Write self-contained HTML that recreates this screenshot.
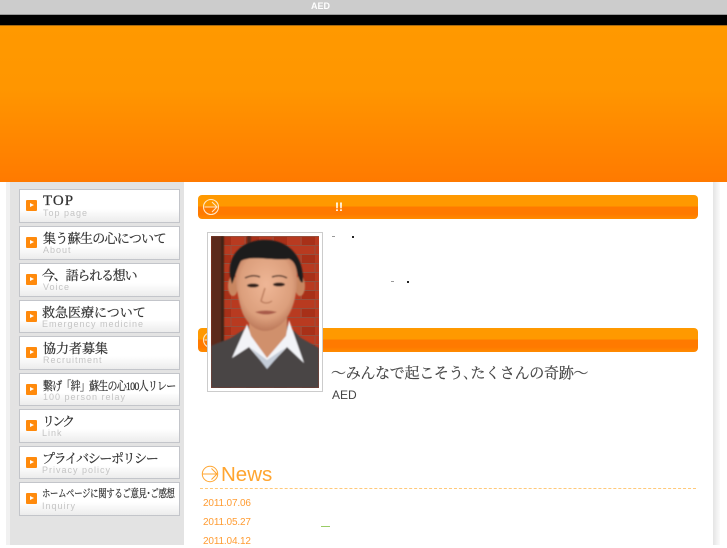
<!DOCTYPE html>
<html lang="ja">
<head>
<meta charset="utf-8">
<title>AED</title>
<style>
html,body{margin:0;padding:0;background:#fff}
body{position:relative;width:727px;height:545px;overflow:hidden;font-family:"Liberation Sans","Noto Sans CJK JP",sans-serif}
.a{position:absolute}
#top{left:0;top:0;width:727px;height:14px;background:#ccc;border-bottom:1px solid #999}
#top span{position:absolute;left:311px;top:0;font-size:9px;line-height:12px;font-weight:bold;color:#fff}
#blk{left:0;top:15px;width:727px;height:10px;background:#000}
#hdr{left:0;top:25px;width:727px;height:157px;background:linear-gradient(#ff9900,#ff9600 40%,#ff7a00);border-top:1px solid #a86a10;box-sizing:border-box}
#sh1{left:6px;top:182px;width:4px;height:363px;background:#f1f1f1}
#side{left:10px;top:182px;width:174px;height:363px;background:#e3e3e3}
#sh2{left:713px;top:182px;width:7px;height:363px;background:linear-gradient(90deg,#e4e4e4,#f2f2f2 60%,#fbfbfb)}
.m{position:absolute;left:19px;width:161px;box-sizing:border-box;border:1px solid #c3c5ca;background:linear-gradient(#fff 0,#fff 60%,#ececec 100%)}
.m i{position:absolute;left:6px;top:10px;width:11px;height:11px;border-radius:1px;background:#ff8a0c}
.m i:after{content:"";position:absolute;left:4px;top:3px;border-left:4px solid #fff;border-top:2.5px solid transparent;border-bottom:2.5px solid transparent}
.m b{position:absolute;left:23px;top:4px;font:normal 13px/16px "Liberation Serif","Noto Serif CJK SC",serif;color:#333;white-space:nowrap;-webkit-text-stroke:.25px #333;transform-origin:0 50%}
.m s{position:absolute;left:23px;top:17px;text-decoration:none;font:9px/12px "Liberation Sans",sans-serif;letter-spacing:1px;color:#c4c4c4;white-space:nowrap}
.bar{position:absolute;left:198px;width:500px;height:24px;border-radius:4px;background:linear-gradient(#ff9900 0,#ff9900 46%,#ff7a00 50%,#ff7a00 80%,#ff8c00 100%)}
.ci{position:absolute}
#ttl{left:335px;top:200px;font-size:12px;line-height:14px;font-weight:bold;color:#fff}
.d{position:absolute;width:2px;height:2px;background:#222}
.d.l{width:3px;height:1px;background:#999}
#lead{left:331px;top:364px;font:15px/20px "Liberation Serif","Noto Serif CJK JP",serif;letter-spacing:-.3px;color:#444;white-space:nowrap;-webkit-text-stroke:.2px #444}
#aed{left:332px;top:388px;font-size:12px;line-height:14px;color:#444}
#news{left:221px;top:462px;font-size:20.5px;line-height:26px;color:#ffa530}
#dot{left:200px;top:488px;width:496px;border-top:1px dashed #ffc97a}
.dt{position:absolute;left:203px;font-size:10px;line-height:13px;letter-spacing:-.15px;color:#ff9c33}
#gr{left:321px;top:526px;width:9px;height:1px;background:#9c6}
#frame{left:207px;top:232px;width:116px;height:160px;box-sizing:border-box;border:1px solid #ccc;background:#fff}
</style>
</head>
<body>
<div class="a" id="top"><span>AED</span></div>
<div class="a" id="blk"></div>
<div class="a" id="hdr"></div>
<div class="a" id="sh1"></div>
<div class="a" id="side"></div>
<div class="a" id="sh2"></div>

<div class="m" style="top:189px;height:34px"><i></i><b style="letter-spacing:1px;font-size:15px;top:3px">TOP</b><s>Top page</s></div>
<div class="m" style="top:226px;height:34px"><i></i><b style="letter-spacing:-.7px">集う蘇生の心について</b><s>About</s></div>
<div class="m" style="top:263px;height:34px"><i></i><b style="left:22px;letter-spacing:-1.2px">今、語られる想い</b><s style="left:23px">Voice</s></div>
<div class="m" style="top:300px;height:33px"><i></i><b style="left:22px">救急医療について</b><s style="left:22px">Emergency medicine</s></div>
<div class="m" style="top:336px;height:34px"><i></i><b>協力者募集</b><s>Recruitment</s></div>
<div class="m" style="top:373px;height:33px"><i></i><b style="font-size:12px;letter-spacing:-.9px;transform:scaleX(.83)">繋げ「絆」蘇生の心100人リレー</b><s>100 person relay</s></div>
<div class="m" style="top:409px;height:34px"><i></i><b style="left:22px;letter-spacing:-2.8px">リンク</b><s style="left:22px">Link</s></div>
<div class="m" style="top:446px;height:33px"><i></i><b style="left:22px;letter-spacing:-1.4px">プライバシーポリシー</b><s style="left:22px">Privacy policy</s></div>
<div class="m" style="top:482px;height:34px"><i></i><b style="left:22px;top:3px;font-size:11px;letter-spacing:-.4px;transform:scaleX(.76)">ホームページに関するご意見･ご感想</b><s style="left:22px">Inquiry</s></div>

<div class="bar" style="top:195px"></div>
<svg class="ci" style="left:202px;top:198px" width="18" height="18" viewBox="0 0 18 18" fill="none" stroke="#ffe6c4" stroke-width="1.1"><circle cx="9" cy="9" r="7.5"/><path d="M2.5 9H15M10 4l5 5-5 5"/></svg>
<div class="a" id="ttl">!!</div>
<div class="d l" style="left:332px;top:236px"></div>
<div class="d" style="left:352px;top:236px"></div>
<div class="d l" style="left:391px;top:281px"></div>
<div class="d" style="left:407px;top:281px"></div>

<div class="bar" style="top:328px"></div>
<svg class="ci" style="left:202px;top:331px" width="18" height="18" viewBox="0 0 18 18" fill="none" stroke="#ffe6c4" stroke-width="1.1"><circle cx="9" cy="9" r="7.5"/><path d="M2.5 9H15M10 4l5 5-5 5"/></svg>

<div class="a" id="frame">
<svg style="position:absolute;left:3px;top:3px" width="108" height="152" viewBox="0 0 108 152">
<defs>
<pattern id="br" width="28" height="18" patternUnits="userSpaceOnUse">
<rect width="28" height="18" fill="#b83a20"/>
<rect x="7" y="1" width="13" height="8" fill="#a83018"/>
<path d="M0 .5H28M0 9.500H28M6 0V9M20 9V18" stroke="#95503e" stroke-width=".9" fill="none"/>
</pattern>
<filter id="s" x="-5%" y="-5%" width="110%" height="110%"><feGaussianBlur stdDeviation=".9"/></filter>
<radialGradient id="f" cx="50%" cy="42%" r="60%"><stop offset="0" stop-color="#eeb696"/><stop offset=".7" stop-color="#dc9f7c"/><stop offset="1" stop-color="#b87456"/></radialGradient>
<clipPath id="c"><rect width="108" height="152"/></clipPath>
</defs>
<g clip-path="url(#c)">
<rect width="108" height="152" fill="url(#br)"/>
<g filter="url(#s)">
<rect x="0" y="0" width="10" height="125" fill="#5c2c1c"/>
<rect x="10" y="0" width="3" height="125" fill="#3e2018"/>
<rect x="36" y="0" width="4" height="14" fill="#5c2c1c"/>
<path d="M0 110 L20 102 L38 90 L78 90 L90 102 L108 112 V152 H0Z" fill="#4a4445"/>
<path d="M38 68 H76 V108 L56 128 L38 108Z" fill="#d0906c"/>
<path d="M36 88 L21 122 L38 111 L56 132 L76 111 L93 127 L78 84 L75 100 L56 122 L40 100Z" fill="#f2f3f7"/>
<path d="M40 112 L56 133 L74 112 L56 124Z" fill="#c4ccd8"/>
<ellipse cx="22" cy="50" rx="5" ry="10" fill="#c88660"/>
<ellipse cx="89" cy="50" rx="5" ry="10" fill="#c88660"/>
<path d="M25 24 C30 12 80 12 85 26 C89 56 82 84 63 93 C52 98 39 93 32 78 C27 66 23 40 25 24Z" fill="url(#f)"/>
<path d="M21 48 C13 24 27 6 50 4 C75 2 93 18 92 46 C90 48 88 44 86 36 C85 30 83 25 78 23 C62 25 40 19 30 25 C26 32 24 42 21 48Z" fill="#1d1b1f"/>
<ellipse cx="42" cy="49.500" rx="6" ry="2" fill="#33201a"/>
<ellipse cx="68" cy="48.500" rx="6" ry="2" fill="#33201a"/>
<path d="M34 42 q8 -4 15 -1 M61 41 q8 -3 15 1" stroke="#4e3226" stroke-width="1.5" fill="none"/>
<path d="M54 52 L50 65 Q55 69 61 65" stroke="#b87858" stroke-width="1.3" fill="none"/>
<path d="M44 76 q11 -3 22 0 q-11 5 -22 0Z" fill="#a85a48"/>
</g>
</g>
</svg>
</div>

<div class="a" id="lead">～みんなで起こそう､たくさんの奇跡～</div>
<div class="a" id="aed">AED</div>

<svg class="ci" style="left:201px;top:465px" width="18" height="18" viewBox="0 0 18 18" fill="none" stroke="#ffa530" stroke-width="1"><circle cx="9" cy="9" r="7.7"/><path d="M1.5 9H16M10.500 3.500L16 9l-5.500 5.500"/></svg>
<div class="a" id="news">News</div>
<div class="a" id="dot"></div>
<div class="dt" style="top:497px">2011.07.06</div>
<div class="dt" style="top:516px">2011.05.27</div>
<div class="dt" style="top:535px">2011.04.12</div>
<div class="a" id="gr"></div>
</body>
</html>
